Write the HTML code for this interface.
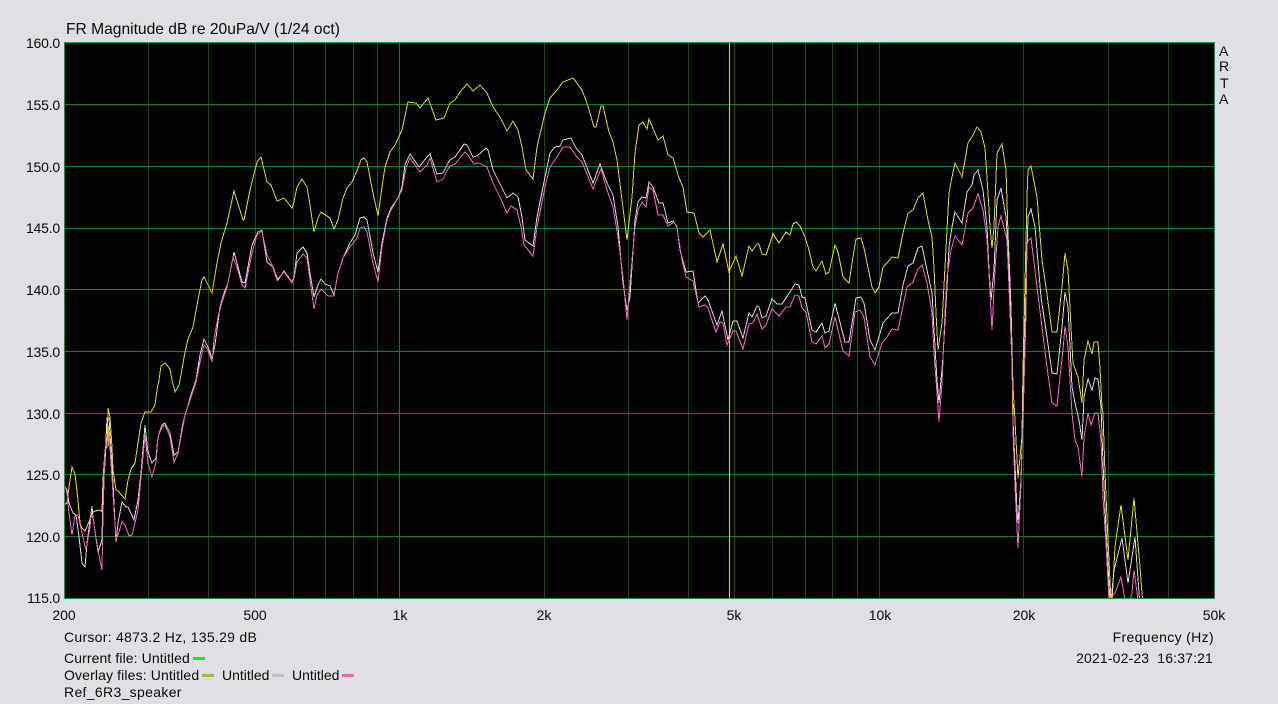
<!DOCTYPE html>
<html><head><meta charset="utf-8"><style>
html,body{margin:0;padding:0;background:#e0dfe3}
body{width:1278px;height:704px;position:relative;overflow:hidden;font:14px/16px "Liberation Sans",Arial,sans-serif;color:#0a0a0a}
span{position:absolute;white-space:pre}
.y{right:1218px;text-align:right;letter-spacing:-.2px}
.x{width:60px;margin-left:-30px;text-align:center;top:607px}
svg{position:absolute;left:0;top:0}
</style></head><body>
<svg width="1278" height="704" viewBox="0 0 1278 704" shape-rendering="crispEdges">
<defs><clipPath id="c"><rect x="64" y="42" width="1151" height="557"/></clipPath></defs>
<rect x="64" y="42" width="1151" height="557" fill="#000"/>
<g stroke="#006000" stroke-width="1">
<path d="M148.5 42V598M208.5 42V598M255.5 42V598M293.5 42V598M325.5 42V598M353.5 42V598M377.5 42V598M544.5 42V598M628.5 42V598M688.5 42V598M734.5 42V598M772.5 42V598M805.5 42V598M832.5 42V598M857.5 42V598M879.5 42V598M1023.5 42V598M1108.5 42V598M1168.5 42V598"/>
</g>
<path d="M399.5 42V598" stroke="#008a00"/>
<path d="M64 104.5H1214M64 166.5H1214M64 228.5H1214M64 289.5H1214M64 351.5H1214M64 413.5H1214M64 474.5H1214M64 536.5H1214" stroke="#008a10"/>
<path d="M729.5 42V598" stroke="#e0e000"/>
<g clip-path="url(#c)" fill="none" stroke-width="1">
<polyline stroke="#e0e000" points="64,505 67,503 69,487 72,467 75,474 78,500 80,523 82,528 85,531 89,522 92,513 95,511 100,510 102,512 103,480 105,450 107,447 108,408 110,417 112,447 113,470 116,490 118,491 125,499 128,480 131,469 135,463 138,443 141,423 145,412 151,412 155,405 157,390 159,380 161,366 165,363 170,369 172,380 175,392 179,385 181,375 185,352 188,339 193,327 198,300 202,280 204,277 212,293 217,263 221,243 227,223 234,191 243,220 244,220 250,190 257,162 261,157 267,182 271,185 277,201 284,198 292,208 294,202 297,187 302,179 307,187 310,205 314,232 318,218 321,212 330,218 334,229 338,220 343,198 347,188 352,182 358,168 361,160 364,158 367,162 373,193 378,216 382,187 385,167 390,152 395,145 402,130 408,102 416,103 420,108 428,98 436,120 444,118 450,103 455,100 460,92 467,84 473,91 480,85 487,93 493,107 500,117 507,131 513,121 518,130 522,147 526,170 533,179 537,147 545,113 550,98 557,90 563,82 573,78 582,90 587,103 594,127 596,127 601,106 603,106 609,132 613,142 617,160 622,200 627,240 632,197 635,153 639,125 643,122 647,129 649,119 658,140 663,136 668,155 673,158 679,178 683,187 687,212 694,213 699,233 703,237 710,230 717,262 723,244 729,272 736,256 742,276 749,246 752,251 757,244 759,244 762,254 766,255 773,234 779,243 786,232 790,235 793,224 796,222 800,226 805,237 809,250 813,267 816,271 822,261 826,274 829,272 835,245 838,252 843,277 849,283 853,257 856,239 861,238 864,248 872,287 875,293 879,287 883,267 887,263 892,257 898,258 903,233 908,213 913,210 918,198 923,193 928,220 932,237 934,267 936,313 938,350 942,323 945,267 947,230 949,193 952,177 955,163 962,177 968,143 973,135 977,127 981,132 985,148 988,193 990,227 992,248 994,227 997,153 1002,144 1006,170 1008,233 1011,307 1013,387 1015,420 1016,440 1018,478 1022,437 1023,370 1027,197 1028,170 1031,166 1037,197 1042,260 1046,287 1052,332 1057,332 1062,287 1065,253 1068,270 1071,327 1073,363 1078,377 1082,403 1084,360 1088,341 1092,354 1094,342 1098,342 1100,368 1102,407 1103,413 1105,473 1108,540 1111,602 1112,602 1115,547 1121,505 1128,560 1134,498 1140,567 1142,593 1143,604"/>
<polyline stroke="#d8d8d8" points="65,487 67,490 69,503 73,513 76,515 79,537 82,563 85,567 87,543 92,506 93,517 98,552 102,540 103,490 105,463 107,418 109,418 113,483 116,542 118,523 122,502 126,507 128,507 134,520 138,500 141,473 145,425 148,452 152,463 156,458 158,437 162,425 165,423 170,433 174,455 178,452 183,423 190,398 196,380 200,355 204,339 208,347 212,358 215,345 218,322 220,307 224,293 228,283 234,252 237,263 242,282 245,283 252,245 258,232 262,230 267,262 273,267 278,280 284,271 292,282 294,277 297,253 303,247 307,253 310,273 314,297 318,285 321,279 325,284 330,286 334,295 338,273 343,258 350,243 355,235 360,218 364,217 367,220 373,253 378,272 382,243 387,218 391,208 398,198 402,187 405,165 410,154 419,167 427,157 430,154 437,174 443,173 448,163 450,160 455,157 460,150 464,144 467,145 473,157 477,156 486,148 488,150 493,170 507,198 513,193 518,197 522,217 525,240 533,246 537,217 545,177 550,153 555,147 560,146 563,140 571,138 576,148 582,155 593,183 600,164 607,183 613,195 618,227 623,283 627,310 630,297 635,220 638,202 642,197 646,198 649,182 653,187 659,203 663,203 668,223 673,221 677,227 680,250 686,272 693,271 698,303 705,296 708,300 717,325 722,311 728,340 733,321 737,321 743,338 749,313 752,317 757,306 759,307 762,318 766,316 772,299 777,304 782,304 788,295 795,284 799,285 802,297 805,298 812,330 816,332 822,323 825,333 829,331 835,303 845,342 849,342 856,298 861,297 864,303 870,340 875,350 883,323 892,313 898,313 903,285 908,266 913,263 918,248 922,246 927,270 932,293 934,330 937,380 939,403 943,357 947,287 949,247 952,227 955,212 962,223 967,192 972,185 974,175 978,170 983,190 987,227 989,270 991,300 994,270 997,200 1001,188 1006,217 1009,263 1012,353 1013,420 1017,510 1018,523 1021,480 1023,413 1026,287 1028,217 1031,209 1035,227 1041,297 1047,337 1052,373 1057,374 1062,327 1065,292 1068,307 1072,387 1075,403 1079,420 1082,440 1084,397 1088,379 1092,390 1095,378 1098,379 1101,407 1103,463 1106,530 1110,602 1111,602 1114,570 1122,538 1128,583 1135,537 1139,593 1140,604"/>
<polyline stroke="#ff60c8" points="65,486 67,493 69,513 72,535 75,515 78,515 82,533 86,550 90,527 91,515 93,518 98,550 102,570 103,513 105,450 107,443 109,432 113,493 116,538 118,535 122,522 125,525 129,536 132,535 135,523 138,510 141,477 145,435 148,463 152,477 156,462 158,437 162,427 165,425 170,437 174,462 178,453 185,415 190,400 196,382 200,362 204,345 208,350 212,362 214,339 218,317 222,302 227,287 233,258 237,267 242,285 245,288 252,253 257,235 262,231 267,255 272,265 277,280 284,272 292,283 294,278 297,262 303,254 307,258 310,280 314,309 317,295 321,289 328,296 334,296 338,273 343,258 350,247 357,238 360,228 364,227 367,232 373,263 378,282 382,247 387,220 391,210 398,198 402,190 406,168 410,158 420,172 427,165 430,158 437,182 443,179 448,169 450,166 455,164 460,158 465,152 468,155 474,164 479,163 487,167 493,183 500,197 507,213 511,206 517,210 521,227 524,245 533,256 537,227 545,187 550,167 557,157 563,147 570,147 577,157 582,162 593,189 601,169 607,190 613,207 618,237 623,277 627,320 630,283 635,227 638,210 642,202 646,207 649,187 653,190 658,215 663,215 668,226 674,222 677,228 682,260 686,277 693,281 699,307 705,305 708,308 716,332 720,322 723,323 727,345 733,331 736,331 743,349 749,324 753,323 757,314 762,329 766,325 772,309 779,316 786,307 790,307 795,295 799,296 802,308 806,312 812,342 816,344 822,336 825,348 829,344 835,317 843,351 849,356 855,312 860,310 864,317 870,357 875,365 882,343 887,337 892,329 898,330 907,287 913,282 918,269 922,265 927,283 932,313 934,353 937,393 939,422 942,383 945,313 947,277 951,250 955,236 962,245 968,213 973,208 978,194 983,210 987,240 989,273 992,330 995,270 998,227 1001,216 1007,240 1009,287 1012,363 1013,430 1015,487 1018,548 1021,483 1023,420 1026,313 1027,242 1031,238 1037,287 1042,327 1047,367 1052,403 1057,406 1060,377 1063,350 1065,326 1068,347 1072,413 1075,440 1078,447 1082,477 1084,437 1088,413 1091,425 1095,413 1098,413 1101,440 1103,497 1106,543 1109,600 1115,593 1121,577 1125,600 1130,600 1132,593 1134,570 1138,600"/>
<path d="M108.5 426V446M1012.5 395V415M1026.5 250V270" stroke="#ffa000"/>
</g>
<rect x="64.5" y="42.5" width="1150" height="556" fill="none" stroke="#00a020"/>
<rect x="193" y="657" width="12" height="3" fill="#00ff00"/>
<rect x="202" y="674" width="12" height="3" fill="#b8b800"/>
<rect x="272" y="674" width="12" height="3" fill="#c0c0c0"/>
<rect x="342" y="674" width="12" height="3" fill="#ff60c0"/>
</svg>
<span style="left:66px;top:22px;font-size:15.6px">FR Magnitude dB re 20uPa/V (1/24 oct)</span>
<span class="y" style="top:35px">160.0</span>
<span class="y" style="top:97px">155.0</span>
<span class="y" style="top:159px">150.0</span>
<span class="y" style="top:220px">145.0</span>
<span class="y" style="top:282px">140.0</span>
<span class="y" style="top:344px">135.0</span>
<span class="y" style="top:406px">130.0</span>
<span class="y" style="top:467px">125.0</span>
<span class="y" style="top:529px">120.0</span>
<span class="y" style="top:590px">115.0</span>
<span style="left:1219px;top:43px">A</span>
<span style="left:1219px;top:58px">R</span>
<span style="left:1220px;top:75px">T</span>
<span style="left:1219px;top:91px">A</span>
<span class="x" style="left:64px">200</span>
<span class="x" style="left:255px">500</span>
<span class="x" style="left:400px">1k</span>
<span class="x" style="left:544px">2k</span>
<span class="x" style="left:734px">5k</span>
<span class="x" style="left:880px">10k</span>
<span class="x" style="left:1024px">20k</span>
<span class="x" style="left:1214px">50k</span>
<span style="left:64px;top:629px;letter-spacing:.28px">Cursor: 4873.2 Hz, 135.29 dB</span>
<span style="left:64px;top:650px;letter-spacing:.1px">Current file: Untitled</span>
<span style="left:64px;top:667px;letter-spacing:.13px">Overlay files: Untitled</span>
<span style="left:222px;top:667px">Untitled</span>
<span style="left:292px;top:667px">Untitled</span>
<span style="left:64px;top:684px;letter-spacing:.33px">Ref_6R3_speaker</span>
<span style="right:64px;top:629px;letter-spacing:.35px">Frequency (Hz)</span>
<span style="right:65px;top:650px;letter-spacing:.15px">2021-02-23  16:37:21</span>
</body></html>
